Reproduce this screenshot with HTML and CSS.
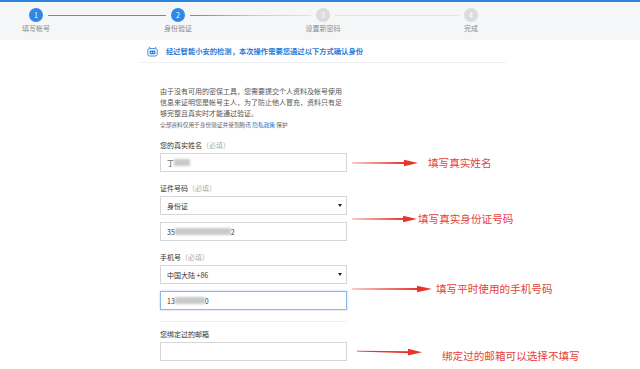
FILE: index.html
```html
<!DOCTYPE html>
<html lang="zh-CN">
<head>
    <meta charset="UTF-8">
    <title>身份验证</title>
    <link rel="stylesheet" href="styles.css">
</head>
<body>
    <div class="page">
        <div class="topline"></div>

        <div class="steps">
            <div class="step done"><span class="num">1</span><span class="label">填写帐号</span></div>
            <div class="bar bar-done"></div>
            <div class="step done"><span class="num">2</span><span class="label">身份验证</span></div>
            <div class="bar bar-fade"></div>
            <div class="step"><span class="num">3</span><span class="label">设置新密码</span></div>
            <div class="bar bar-todo"></div>
            <div class="step"><span class="num">4</span><span class="label">完成</span></div>
        </div>

        <div class="notice">
            <svg class="notice-icon" width="11" height="11" viewBox="0 0 11 11">
                <path d="M3 2.6 L2 0.8 M8 2.6 L9 0.8" stroke="#2f80d8" stroke-width="0.9" fill="none"/>
                <rect x="0.8" y="2.6" width="9.4" height="7.4" rx="1.6" stroke="#2f80d8" stroke-width="0.9" fill="none"/>
                <rect x="2.6" y="4.6" width="5.8" height="3.6" rx="0.8" fill="#2f80d8"/>
                <circle cx="4.3" cy="6.4" r="0.6" fill="#fff"/>
                <circle cx="6.7" cy="6.4" r="0.6" fill="#fff"/>
            </svg>
            <span class="notice-text">经过智能小安的检测，本次操作需要您通过以下方式确认身份</span>
        </div>

        <div class="form">
            <p class="intro">由于没有可用的密保工具，您需要提交个人资料及帐号使用<br>信息来证明您是帐号主人，为了防止他人冒充，资料只有足<br>够完整且真实时才能通过验证。</p>
            <p class="note">全部资料仅用于身份验证并受到腾讯 <a href="#">隐私政策</a> 保护</p>

            <div class="field">
                <div class="field-label">您的真实姓名<span class="req">（必填）</span></div>
                <div class="input">丁<span class="blur w16"></span></div>
            </div>

            <div class="field">
                <div class="field-label">证件号码<span class="req">（必填）</span></div>
                <div class="input select"><span>身份证</span><span class="caret"></span></div>
                <div class="input gap">35<span class="blur w56"></span>2</div>
            </div>

            <div class="field">
                <div class="field-label">手机号<span class="req">（必填）</span></div>
                <div class="input select"><span>中国大陆 +86</span><span class="caret"></span></div>
                <div class="input gap focus">13<span class="blur w30"></span>0</div>
            </div>

            <div class="divider"></div>

            <div class="field last">
                <div class="field-label">您绑定过的邮箱</div>
                <div class="input"></div>
            </div>
        </div>

        <div class="annot a1">
            <svg class="arrow" width="66" height="8" viewBox="0 0 66 8"><polygon points="0,3.7 54,3 54,5 0,4.3"/><polygon points="52,0.8 66,4 52,7.2"/></svg>
            <span class="annot-text t1">填写真实姓名</span>
        </div>
        <div class="annot a2">
            <svg class="arrow" width="65" height="8" viewBox="0 0 65 8"><polygon points="0,3.7 53,3 53,5 0,4.3"/><polygon points="51,0.8 65,4 51,7.2"/></svg>
            <span class="annot-text t2">填写真实身份证号码</span>
        </div>
        <div class="annot a3">
            <svg class="arrow" width="80" height="8" viewBox="0 0 80 8"><polygon points="0,3.7 67,3 67,5 0,4.3"/><polygon points="65,0.8 80,4 65,7.2"/></svg>
            <span class="annot-text t3">填写平时使用的手机号码</span>
        </div>
        <div class="annot a4">
            <svg class="arrow" width="65" height="8" viewBox="0 0 65 8"><polygon points="0,2.8 53,3.2 53,5.2 0,3.4"/><polygon points="51,0.8 65,4.2 51,7.4"/></svg>
            <span class="annot-text t4">绑定过的邮箱可以选择不填写</span>
        </div>
    </div>
</body>
</html>
```

FILE: styles.css
```css
* {
    margin: 0;
    padding: 0;
    box-sizing: border-box;
}

body {
    font-family: "Noto Sans CJK SC", "Noto Sans", sans-serif;
    background: #fff;
    color: #333;
}

.page {
    position: relative;
    width: 640px;
    height: 369px;
    overflow: hidden;
}

.topline {
    height: 2px;
    background: #2f84dc;
}

/* 步骤条 */
.steps {
    height: 38px;
    background: #f5f6f8;
    display: flex;
    align-items: flex-start;
    padding: 6px 0 0 24px;
}

.step {
    width: 24px;
    display: flex;
    flex-direction: column;
    align-items: center;
}

.num {
    width: 14px;
    height: 14px;
    border-radius: 50%;
    background: #d9dbdf;
    color: #fff;
    font-size: 7px;
    line-height: 14px;
    text-align: center;
}

.step.done .num {
    background: #2e88e4;
}

.label {
    margin-top: 2px;
    font-size: 7px;
    line-height: 8px;
    color: #8a8a8a;
    white-space: nowrap;
}

.bar {
    height: 1px;
    margin-top: 7px;
    background: #e2e4e8;
}

.bar-done {
    width: 118px;
    background: #4c90de;
}

.bar-fade {
    width: 121px;
    background: linear-gradient(to right, #4c90de, #b9cfe9 55%, #e2e4e8);
}

.bar-todo {
    width: 124px;
}

/* 提示条 */
.notice {
    width: 366px;
    height: 23px;
    margin-left: 140px;
    padding-left: 7px;
    display: flex;
    align-items: center;
    gap: 8px;
    border-bottom: 1px solid #eef0f3;
}

.notice-text {
    font-size: 7.3px;
    color: #2a7bd6;
    font-weight: bold;
    white-space: nowrap;
}

/* 表单 */
.form {
    width: 187px;
    margin-left: 160px;
}

.intro {
    margin-top: 23px;
    font-size: 7px;
    line-height: 11px;
    color: #555;
    white-space: nowrap;
}

.note {
    margin-top: 2px;
    font-size: 5.7px;
    line-height: 8px;
    color: #666;
    white-space: nowrap;
}

.note a {
    color: #2a7bd6;
    text-decoration: none;
}

.field {
    margin-top: 11px;
}

.field-label {
    font-size: 7px;
    line-height: 10px;
    color: #333;
    margin-bottom: 3px;
    white-space: nowrap;
}

.req {
    color: #aaa;
}

.input {
    height: 19px;
    border: 1px solid #d6d6d6;
    background: #fff;
    padding: 0 6px;
    display: flex;
    align-items: center;
    font-size: 7px;
    color: #333;
}

.input.gap {
    margin-top: 7px;
}

.input.focus {
    border-color: #8cb6ee;
    box-shadow: 0 0 2px rgba(90, 150, 235, 0.45);
}

.select {
    justify-content: space-between;
    padding-right: 4px;
}

.caret {
    width: 0;
    height: 0;
    border-left: 2px solid transparent;
    border-right: 2px solid transparent;
    border-top: 3px solid #222;
}

.blur {
    display: inline-block;
    height: 7px;
    background: #c9c9c9;
    filter: blur(1.2px);
}

.w16 { width: 16px; }
.w30 { width: 30px; }
.w56 { width: 56px; }

.divider {
    height: 1px;
    margin-top: 11px;
    background: #eeeeee;
}

.field.last {
    margin-top: 7px;
}

/* 标注 */
.annot {
    position: absolute;
    display: flex;
    align-items: center;
}

.arrow {
    fill: #e7352c;
    flex: none;
}

.annot-text {
    font-size: 10.6px;
    line-height: 14px;
    color: #e5413b;
    white-space: nowrap;
}

.a1 { left: 352px; top: 156px; }
.a1 .annot-text { margin-left: 10px; }

.a2 { left: 352px; top: 212px; }
.a2 .annot-text { margin-left: 1px; }

.a3 { left: 352px; top: 282px; }
.a3 .annot-text { margin-left: 4px; }

.a4 { left: 357px; top: 341px; }
.a4 .annot-text { margin-left: 20px; margin-top: 8px; }
```
